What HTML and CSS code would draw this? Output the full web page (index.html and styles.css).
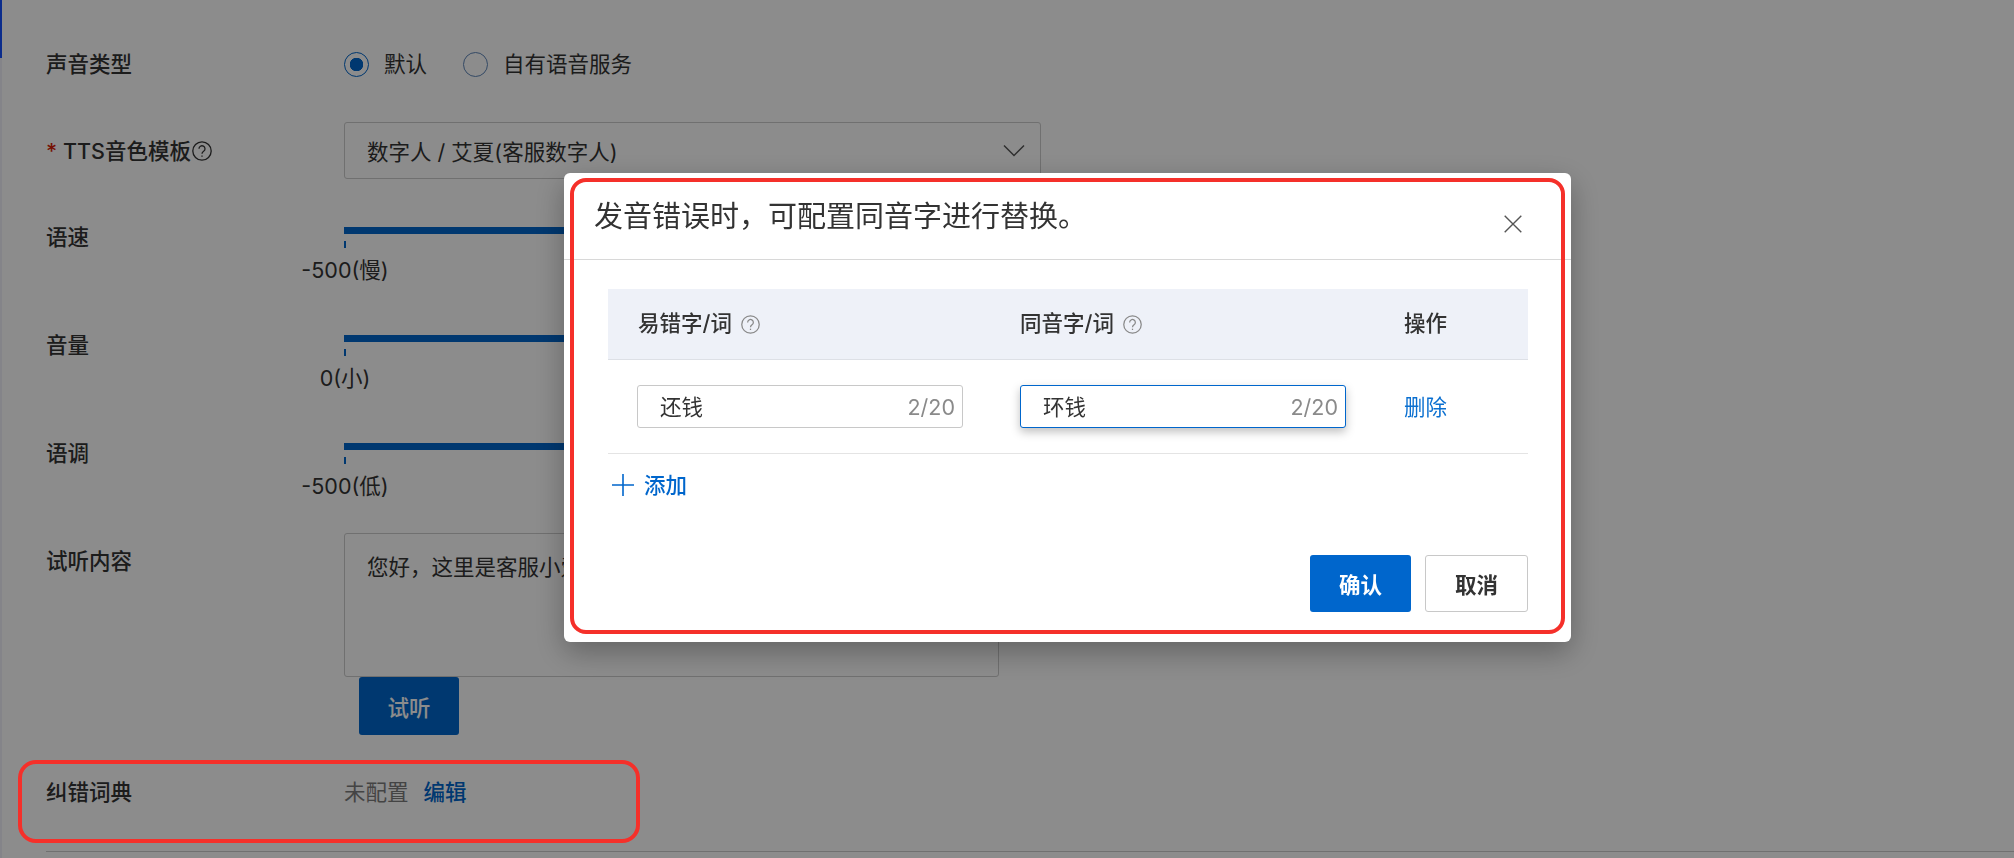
FILE: index.html
```html
<!DOCTYPE html>
<html lang="zh-CN">

  <head>
    <meta charset="UTF-8">
    <meta name="viewport" content="width=device-width, initial-scale=1.0">
    <title>纠错词典</title>
    <link rel="stylesheet" href="styles.css">
  </head>

  <body>
    <div class="page">
      <div class="rail"><div class="rail-mark"></div></div>

      <div class="form">
        <div class="row row-radio">
          <div class="label">声音类型</div>
          <div class="radios">
            <span class="radio checked"></span><span class="radio-text">默认</span>
            <span class="radio"></span><span class="radio-text">自有语音服务</span>
          </div>
        </div>

        <div class="row row-select">
          <div class="label label-required">
            <span class="star">*</span>TTS音色模板
            <svg class="help help-form" viewBox="0 0 20 20"><circle cx="10" cy="10" r="9.2"/><path d="M7 7.8a3 3 0 1 1 4.6 2.5c-1 .7-1.6 1.2-1.6 2.5"/><path d="M10 14.4v1.4"/></svg>
          </div>
          <div class="select">
            <span class="select-text">数字人 / 艾夏(客服数字人)</span>
            <svg class="chevron" viewBox="0 0 22 14"><path d="M1 1.5l10 10 10-10"/></svg>
          </div>
        </div>

        <div class="row row-slider">
          <div class="label">语速</div>
          <div class="slider">
            <div class="track"></div>
            <div class="tick"></div>
            <div class="tick-label">-500(慢)</div>
          </div>
        </div>

        <div class="row row-slider">
          <div class="label">音量</div>
          <div class="slider">
            <div class="track"></div>
            <div class="tick"></div>
            <div class="tick-label">0(小)</div>
          </div>
        </div>

        <div class="row row-slider">
          <div class="label">语调</div>
          <div class="slider">
            <div class="track"></div>
            <div class="tick"></div>
            <div class="tick-label">-500(低)</div>
          </div>
        </div>

        <div class="row row-text">
          <div class="label">试听内容</div>
          <div class="text-col">
            <div class="textarea">您好，这里是客服小爱，很高兴为您服务。</div>
            <button class="btn btn-primary btn-listen">试听</button>
          </div>
        </div>

        <div class="row row-dict">
          <div class="label">纠错词典</div>
          <div class="dict-value"><span class="muted">未配置</span><a class="link">编辑</a></div>
        </div>

        <div class="form-line"></div>
      </div>
    </div>

    <div class="mask"></div>

    <div class="modal">
      <div class="modal-head">
        <div class="modal-title">发音错误时，可配置同音字进行替换。</div>
        <svg class="close" viewBox="0 0 18 18"><path d="M.7.7l16.6 16.6M17.3.7L.7 17.3"/></svg>
      </div>

      <div class="modal-body">
        <div class="table-head">
          <div class="th th-first">易错字/词
            <svg class="help" viewBox="0 0 20 20"><circle cx="10" cy="10" r="9.2"/><path d="M7 7.8a3 3 0 1 1 4.6 2.5c-1 .7-1.6 1.2-1.6 2.5"/><path d="M10 14.4v1.4"/></svg>
          </div>
          <div class="th">同音字/词
            <svg class="help" viewBox="0 0 20 20"><circle cx="10" cy="10" r="9.2"/><path d="M7 7.8a3 3 0 1 1 4.6 2.5c-1 .7-1.6 1.2-1.6 2.5"/><path d="M10 14.4v1.4"/></svg>
          </div>
          <div class="th">操作</div>
        </div>

        <div class="table-row">
          <div class="td td-first">
            <div class="input"><span>还钱</span><span class="count">2/20</span></div>
          </div>
          <div class="td">
            <div class="input focused"><span>环钱</span><span class="count">2/20</span></div>
          </div>
          <div class="td"><a class="link-bright">删除</a></div>
        </div>

        <div class="add">
          <svg class="plus" viewBox="0 0 22 22"><path d="M11 0v22M0 11h22"/></svg>
          <span>添加</span>
        </div>

        <div class="modal-foot">
          <button class="btn btn-confirm">确认</button>
          <button class="btn btn-cancel">取消</button>
        </div>
      </div>
    </div>

    <div class="mark mark-modal"></div>
    <div class="mark mark-dict"></div>
  </body>

</html>
```

FILE: styles.css
```css
:root {
  --primary: #0066cc;
  --text-color: #333;
  --line: #cccccc;
  --font: Inter, "Noto Sans CJK SC", sans-serif;
}

* {
  box-sizing: border-box;
}

html,
body {
  height: 100%;
}

body {
  margin: 0;
  overflow: hidden;
  background-color: #fff;
  color: var(--text-color);
  font-family: var(--font);
  font-size: 21.5px;
  line-height: 30px;
}

.page {
  display: flex;
  height: 100%;
}

.rail {
  flex: none;
  width: 2px;
  background-color: #f0f0fa;
}

.rail-mark {
  height: 58px;
  background-color: #1550ff;
}

.form {
  flex: 1;
  padding: 49px 0 0 44px;
}

.row {
  display: flex;
}

.label {
  flex: none;
  width: 298px;
  font-weight: 500;
}

/* first row */
.row-radio {
  height: 30px;
}

.radios {
  display: flex;
  align-items: center;
}

.radio {
  width: 25px;
  height: 25px;
  margin-right: 15px;
  border: 1.5px solid #5f86b8;
  border-radius: 50%;
}

.radio.checked {
  border-color: var(--primary);
  background: radial-gradient(circle, var(--primary) 0 6.5px, transparent 7px);
}

.radio-text {
  margin-right: 36px;
}

/* select */
.row-select {
  margin-top: 43px;
  align-items: center;
}

.label-required {
  display: flex;
  align-items: center;
  font-weight: 500;
}

.star {
  width: 17px;
  color: #d81e06;
}

.select {
  display: flex;
  align-items: center;
  justify-content: space-between;
  width: 697px;
  height: 57px;
  padding: 0 15px 0 22px;
  border: 1px solid var(--line);
  border-radius: 3px;
}

.select-text {
  padding-top: 2px;
}

.chevron {
  width: 22px;
  height: 14px;
  fill: none;
  stroke: #555;
  stroke-width: 1.5;
}

.help {
  flex: none;
  width: 19px;
  height: 19px;
  margin-left: 3px;
  vertical-align: -3px;
  fill: none;
  stroke: #888;
  stroke-width: 1.3;
}

.help-form {
  width: 20px;
  height: 20px;
  margin-left: 1px;
  stroke: #333;
}

/* sliders */
.row-slider {
  height: 63px;
  margin-top: 45px;
}

.row-select + .row-slider {
  margin-top: 44px;
}

.row-slider .label {
  margin-top: -1px;
}

.slider {
  position: relative;
  width: 696px;
  padding-top: 4px;
}

.track {
  height: 7px;
  background-color: var(--primary);
}

.tick {
  width: 2px;
  height: 7px;
  margin-top: 7px;
  background-color: var(--primary);
}

.tick-label {
  position: absolute;
  top: 32px;
  left: 1px;
  transform: translateX(-50%);
  white-space: nowrap;
}

/* audition text */
.row-text {
  margin-top: 31px;
}

.row-text .label {
  padding-top: 13px;
}

.textarea {
  width: 655px;
  height: 144px;
  padding: 18px 22px;
  border: 1px solid var(--line);
  border-radius: 3px;
}

.btn {
  height: 57px;
  border: none;
  border-radius: 3px;
  font-family: var(--font);
  font-size: 21.5px;
  font-weight: 700;
  cursor: pointer;
}

.btn-primary {
  background-color: var(--primary);
  color: #fff;
}

.btn-listen {
  display: block;
  width: 100px;
  height: 58px;
  margin-left: 15px;
  font-weight: 500;
}

/* dictionary */
.row-dict {
  margin-top: 42px;
}

.muted {
  color: #7d7d7d;
}

.link {
  margin-left: 15px;
  color: var(--primary);
  font-weight: 500;
}

.form-line {
  height: 1px;
  margin-top: 44px;
  background-color: var(--line);
}

.mask {
  position: fixed;
  inset: 0;
  background-color: rgba(0, 0, 0, 0.45);
}

/* modal */
.modal {
  position: fixed;
  top: 173px;
  left: 564px;
  width: 1007px;
  height: 469px;
  border-radius: 6px;
  background-color: #fff;
  box-shadow: 0 10px 30px rgba(0, 0, 0, 0.3);
}

.modal-head {
  display: flex;
  align-items: center;
  justify-content: space-between;
  height: 87px;
  padding: 0 49px 0 30px;
  border-bottom: 1px solid #d8d8d8;
}

.modal-title {
  margin-top: 1px;
  font-size: 29px;
  line-height: 40px;
}

.close {
  width: 18px;
  height: 18px;
  margin-top: 15px;
  fill: none;
  stroke: #555;
  stroke-width: 1.4;
}

.modal-body {
  padding: 29px 43px 0 44px;
}

.table-head,
.table-row {
  display: grid;
  grid-template-columns: 412px 384px 1fr;
  align-items: center;
}

.table-head {
  height: 71px;
  border-bottom: 1px solid #dde0e6;
  background-color: #eef1f8;
}

.th {
  padding-bottom: 2px;
  font-weight: 500;
}

.th-first {
  padding-left: 30px;
}

.table-row {
  height: 94px;
  border-bottom: 1px solid #e4e4e4;
}

.td-first {
  padding-left: 29px;
}

.input {
  display: flex;
  align-items: center;
  justify-content: space-between;
  width: 326px;
  height: 43px;
  padding: 0 7px 0 22px;
  border: 1px solid #c8c8c8;
  border-radius: 3px;
  background-color: #fff;
}

.input.focused {
  border-color: var(--primary);
  box-shadow: 0 4px 10px rgba(0, 0, 0, 0.25);
}

.count {
  color: #8a8a8a;
}

.link-bright {
  color: #0a6fd0;
}

.add {
  display: flex;
  align-items: center;
  height: 22px;
  margin: 20px 0 0 4px;
  color: var(--primary);
  font-weight: 500;
}

.plus {
  width: 22px;
  height: 22px;
  margin-right: 10px;
  fill: none;
  stroke: var(--primary);
  stroke-width: 1.6;
}

.modal-foot {
  display: flex;
  justify-content: flex-end;
  gap: 14px;
  margin-top: 59px;
}

.btn-confirm {
  width: 101px;
  background-color: var(--primary);
  color: #fff;
}

.btn-cancel {
  width: 103px;
  border: 1px solid #c8c8c8;
  background-color: #fff;
  color: var(--text-color);
}

/* red marks drawn over the screenshot */
.mark {
  position: fixed;
  border: 4px solid #f5302a;
}

.mark-modal {
  top: 178px;
  left: 570px;
  width: 995px;
  height: 456px;
  border-radius: 16px;
}

.mark-dict {
  top: 760px;
  left: 18px;
  width: 622px;
  height: 83px;
  border-radius: 18px;
}
```
